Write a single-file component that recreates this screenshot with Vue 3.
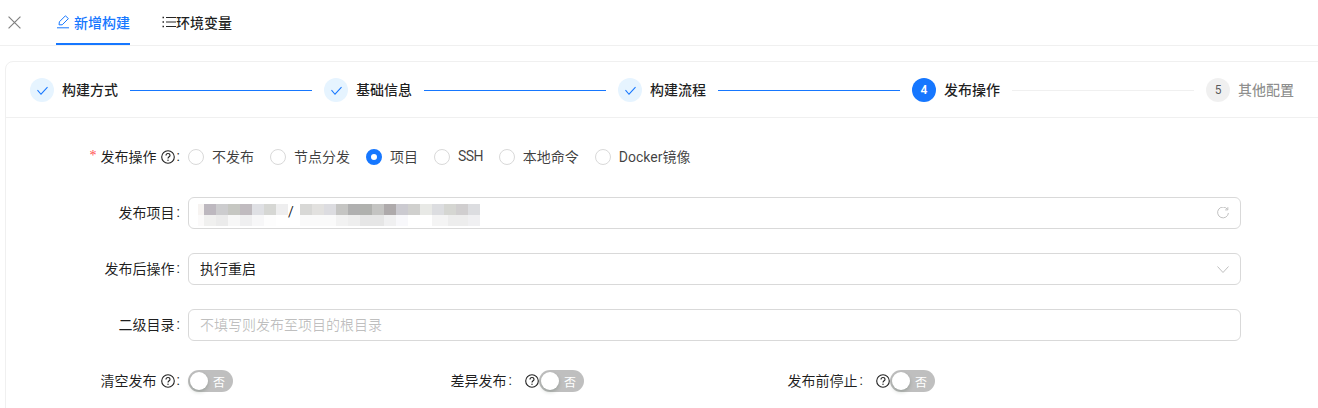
<script setup>
const steps = [
  { title: '构建方式', state: 'done' },
  { title: '基础信息', state: 'done' },
  { title: '构建流程', state: 'done' },
  { title: '发布操作', state: 'active' },
  { title: '其他配置', state: 'wait' },
];

const radios = [
  { label: '不发布' },
  { label: '节点分发' },
  { label: '项目', checked: true },
  { label: 'SSH', latin: true },
  { label: '本地命令' },
  { label: 'Docker镜像' },
];

// 打码区域的色块
const mosaicTop = [
  ['#f6f3f1', 6], ['#bdb8bf', 12], ['#ccccce', 12], ['#c6c7c2', 12], ['#c0bbbf', 12], ['#dfe0e4', 12], ['#d6d7d4', 12], ['#eeeeef', 12],
];
const mosaicBottom = [
  ['#fbfafa', 6], ['#f0f0ef', 12], ['#ebebeb', 12], ['#f7f7f7', 12], ['#efeff0', 12], ['#f7f7f8', 12], ['#fdfdfd', 12],
];
const mosaicTop2 = [
  ['#ffffff', 6], ['#d8d8d6', 12], ['#e2e1df', 12], ['#dcdce0', 12], ['#c5c5c3', 12], ['#b0b0b0', 12], ['#b0b1ae', 12], ['#c4c4c2', 12], ['#aeaaab', 12], ['#cbcad0', 12], ['#d0d0ce', 12], ['#e8e9e6', 12], ['#dcdde0', 12], ['#d5d6d2', 12], ['#d0cecf', 12], ['#dcdde0', 12],
];
const mosaicBottom2 = [
  ['#ffffff', 6], ['#fafafa', 36], ['#f2f2f2', 12], ['#eeeeee', 12], ['#e6e6e6', 24], ['#f0f0f1', 12], ['#f8f8fb', 12], ['#ffffff', 24], ['#f4f4f4', 16], ['#ededed', 20], ['#f0f0f2', 12],
];
</script>

<template>
  <div class="page">
    <div class="tabs">
      <svg class="close" viewBox="0 0 14 14" fill="none" stroke="#808080" stroke-width="1.3">
        <path d="M0.6 0.6 13.4 13.4M13.4 0.6 0.6 13.4" />
      </svg>
      <div class="tab tab--active">
        <svg class="tab-icon" viewBox="0 0 14 14" fill="none" stroke="#1677ff" stroke-width="1">
          <path d="M3 9.8 3.4 6.8 9.4 0.8 12.4 3.6 6.2 9.8ZM1 12.8H13" />
        </svg>
        新增构建
      </div>
      <div class="tab">
        <svg class="tab-icon" viewBox="0 0 14 14" fill="none" stroke="#262626" stroke-width="1">
          <path d="M4 2.5H14M4 7H14M4 11.5H14" />
          <path d="M0.5 2.5H2M0.5 7H2M0.5 11.5H2" stroke-width="1.4" />
        </svg>
        环境变量
      </div>
    </div>

    <div class="card">
      <div class="steps">
        <template v-for="(step, i) in steps" :key="step.title">
          <div class="step" :class="'step--' + step.state">
            <span class="step-icon">
              <svg v-if="step.state === 'done'" viewBox="0 0 14 14" fill="none" stroke="#1677ff" stroke-width="1.1">
                <path d="M1.6 6.6 5.4 11 12.4 3.4" />
              </svg>
              <template v-else>{{ i + 1 }}</template>
            </span>
            <span class="step-title">{{ step.title }}</span>
          </div>
          <div
            v-if="i < steps.length - 1"
            class="step-line"
            :class="{ 'step-line--done': step.state === 'done' }"
          ></div>
        </template>
      </div>

      <div class="form">
        <div class="row">
          <label class="label">
            <span class="required">*</span>发布操作
            <svg class="help help--gap" viewBox="0 0 14 14" fill="none" stroke="#222" stroke-width="1.1">
              <circle cx="7" cy="7" r="6.3" />
              <path d="M5 5.5C5 4.3 6 3.5 7 3.5S9 4.3 9 5.4C9 6.8 7 6.8 7 8.5" />
              <circle cx="7" cy="10.3" r="0.7" fill="#222" stroke="none" />
            </svg>
            <span class="colon">:</span>
          </label>
          <div class="radios">
            <div v-for="r in radios" :key="r.label" class="radio">
              <span class="radio-dot" :class="{ 'radio-dot--on': r.checked }"></span>
              <span class="radio-text" :class="{ 'radio-text--latin': r.latin }">{{ r.label }}</span>
            </div>
          </div>
        </div>

        <div class="row">
          <label class="label">发布项目<span class="colon">:</span></label>
          <div class="input">
            <div class="mosaic mosaic--first">
              <div class="mosaic-row">
                <i v-for="(c, i) in mosaicTop" :key="i" :style="{ background: c[0], width: c[1] + 'px' }"></i>
              </div>
              <div class="mosaic-row">
                <i v-for="(c, i) in mosaicBottom" :key="i" :style="{ background: c[0], width: c[1] + 'px' }"></i>
              </div>
            </div>
            <span class="slash">/</span>
            <div class="mosaic">
              <div class="mosaic-row">
                <i v-for="(c, i) in mosaicTop2" :key="i" :style="{ background: c[0], width: c[1] + 'px' }"></i>
              </div>
              <div class="mosaic-row">
                <i v-for="(c, i) in mosaicBottom2" :key="i" :style="{ background: c[0], width: c[1] + 'px' }"></i>
              </div>
            </div>
            <svg class="suffix" viewBox="1 0.8 12 12.4" fill="none" stroke="#bfbfbf" stroke-width="1">
              <path d="M11.6 3.2A5.6 5.6 0 1 0 12.6 7" />
              <path d="M12 1V3.8H9.2" />
            </svg>
          </div>
        </div>

        <div class="row">
          <label class="label">发布后操作<span class="colon">:</span></label>
          <div class="input">
            <span>执行重启</span>
            <svg class="suffix" viewBox="1 1 12 12" fill="none" stroke="#bfbfbf" stroke-width="1">
              <path d="M1.5 4.5 7 10.5 12.5 4.5" />
            </svg>
          </div>
        </div>

        <div class="row">
          <label class="label">二级目录<span class="colon">:</span></label>
          <div class="input input--placeholder">不填写则发布至项目的根目录</div>
        </div>

        <div class="row row--switches">
          <div class="switch-item">
            <label class="label">
              清空发布
              <svg class="help help--gap" viewBox="0 0 14 14" fill="none" stroke="#222" stroke-width="1.1">
                <circle cx="7" cy="7" r="6.3" />
                <path d="M5 5.5C5 4.3 6 3.5 7 3.5S9 4.3 9 5.4C9 6.8 7 6.8 7 8.5" />
                <circle cx="7" cy="10.3" r="0.7" fill="#222" stroke="none" />
              </svg>
              <span class="colon">:</span>
            </label>
            <div class="switch"><span class="switch-knob"></span><span class="switch-text">否</span></div>
          </div>
          <div class="switch-item">
            <label class="label">
              差异发布<span class="colon colon--wide">:</span>
              <svg class="help" viewBox="0 0 14 14" fill="none" stroke="#222" stroke-width="1.1">
                <circle cx="7" cy="7" r="6.3" />
                <path d="M5 5.5C5 4.3 6 3.5 7 3.5S9 4.3 9 5.4C9 6.8 7 6.8 7 8.5" />
                <circle cx="7" cy="10.3" r="0.7" fill="#222" stroke="none" />
              </svg>
            </label>
            <div class="switch"><span class="switch-knob"></span><span class="switch-text">否</span></div>
          </div>
          <div class="switch-item">
            <label class="label">
              发布前停止<span class="colon colon--wide">:</span>
              <svg class="help" viewBox="0 0 14 14" fill="none" stroke="#222" stroke-width="1.1">
                <circle cx="7" cy="7" r="6.3" />
                <path d="M5 5.5C5 4.3 6 3.5 7 3.5S9 4.3 9 5.4C9 6.8 7 6.8 7 8.5" />
                <circle cx="7" cy="10.3" r="0.7" fill="#222" stroke="none" />
              </svg>
            </label>
            <div class="switch"><span class="switch-knob"></span><span class="switch-text">否</span></div>
          </div>
        </div>
      </div>
    </div>
  </div>
</template>

<style scoped>
.page {
  width: 1318px;
  height: 408px;
  overflow: hidden;
  background: #fff;
  color: rgba(0, 0, 0, 0.88);
  font-family: Roboto, "Noto Sans CJK SC", sans-serif;
  font-size: 14px;
}

.tabs {
  display: flex;
  align-items: stretch;
  height: 45px;
  padding-left: 8px;
  border-bottom: 1px solid #f0f0f0;
}

.close {
  width: 13px;
  height: 13px;
  margin-top: 16px;
  margin-right: 35px;
}

.tab {
  display: flex;
  align-items: center;
  height: 45px;
  box-sizing: border-box;
  padding-bottom: 1px;
  margin-right: 32px;
  font-weight: 500;
}

.tab--active {
  color: #1677ff;
  border-bottom: 2px solid #1677ff;
  padding-bottom: 0;
}

.tab-icon {
  width: 14px;
  height: 14px;
}

.tab--active .tab-icon {
  margin-right: 4px;
}

.card {
  margin: 15px 0 0 5px;
  width: 1340px;
  height: 420px;
  border: 1px solid #f0f0f0;
  border-radius: 8px;
  box-sizing: border-box;
}

.steps {
  display: flex;
  align-items: flex-start;
  padding: 16px 50px 15px 24px;
  border-bottom: 1px solid #f0f0f0;
}

.step {
  display: flex;
  align-items: center;
  flex: none;
}

.step-icon {
  display: flex;
  align-items: center;
  justify-content: center;
  width: 24px;
  height: 24px;
  border-radius: 50%;
  margin-right: 8px;
  font-size: 12px;
  background: rgba(0, 0, 0, 0.06);
  color: rgba(0, 0, 0, 0.65);
}

.step-icon svg {
  width: 13px;
  height: 13px;
}

.step--done .step-icon {
  background: #e6f4ff;
}

.step--active .step-icon {
  background: #1677ff;
  color: #fff;
  font-weight: 600;
}

.step-title {
  font-weight: 500;
  line-height: 24px;
}

.step--wait .step-title {
  color: rgba(0, 0, 0, 0.45);
}

.step-line {
  flex: 1;
  height: 1px;
  margin: 12px 12px 0;
  background: #f0f0f0;
}

.step-line--done {
  background: #1677ff;
}

.form {
  display: flex;
  flex-direction: column;
  gap: 24px;
  padding-top: 23px;
}

.row {
  display: flex;
  align-items: center;
  min-height: 32px;
}

.label {
  display: flex;
  align-items: center;
  justify-content: flex-end;
  flex: none;
  width: 182px;
  padding-bottom: 2px;
  white-space: nowrap;
}

.colon {
  margin: 0 8px 0 2px;
}

.colon--wide {
  margin: 0 13px 0 2px;
}

.required {
  color: #ff4d4f;
  margin-right: 4px;
  font-family: SimSun, "Liberation Serif", serif;
}

.help {
  width: 14px;
  height: 14px;
  flex: none;
  margin-top: 2px;
}

.help--gap {
  margin-left: 4px;
}

.radios {
  display: flex;
  align-items: center;
}

.radio {
  display: flex;
  align-items: center;
  margin-right: 16px;
  gap: 8px;
  color: rgba(0, 0, 0, 0.75);
}

.radio-text {
  padding-bottom: 2px;
}

.radio-text--latin {
  letter-spacing: -0.6px;
}

.radio-dot {
  width: 16px;
  height: 16px;
  border: 1px solid #d9d9d9;
  border-radius: 50%;
  box-sizing: border-box;
}

.radio-dot--on {
  border: 5px solid #1677ff;
}

.input {
  display: flex;
  align-items: center;
  width: 1053px;
  height: 32px;
  box-sizing: border-box;
  padding: 0 11px 2px;
  border: 1px solid #d9d9d9;
  border-radius: 6px;
}

.input--placeholder {
  color: rgba(0, 0, 0, 0.25);
}

.suffix {
  width: 12px;
  height: 12px;
  margin-left: auto;
  margin-top: 2px;
}

.mosaic {
  display: flex;
  flex-direction: column;
  align-self: flex-start;
  margin-top: 6px;
}

.mosaic--first {
  margin-left: -2px;
}

.mosaic-row {
  display: flex;
  height: 11px;
}

.mosaic-row i {
  display: block;
  height: 100%;
}

.slash {
  width: 6px;
  text-align: center;
}

.row--switches {
  display: grid;
  grid-template-columns: repeat(3, 351px);
}

.switch-item {
  display: flex;
  align-items: center;
}

.switch {
  display: flex;
  align-items: center;
  width: 45px;
  height: 22px;
  border-radius: 11px;
  background: rgba(0, 0, 0, 0.25);
  padding-left: 2px;
  box-sizing: border-box;
}

.switch-knob {
  width: 18px;
  height: 18px;
  border-radius: 50%;
  background: #fff;
  box-shadow: 0 2px 4px rgba(0, 35, 11, 0.2);
}

.switch-text {
  margin-left: 5px;
  color: #fff;
  font-size: 12px;
}
</style>
